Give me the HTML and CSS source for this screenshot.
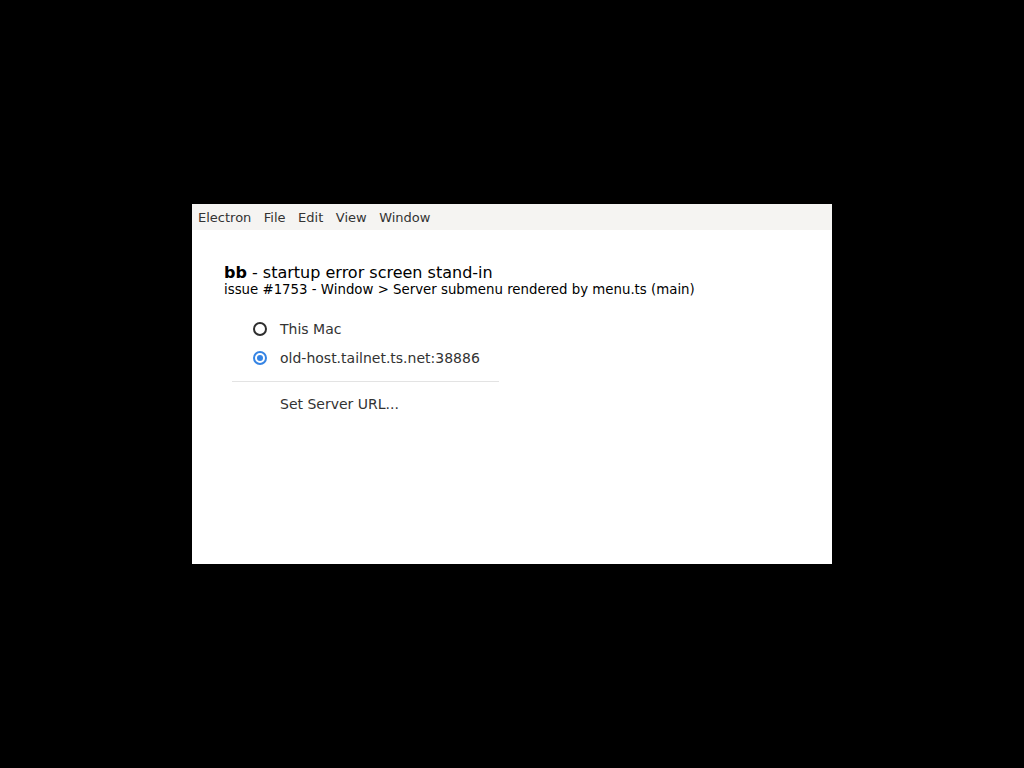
FILE: index.html
```html
<!DOCTYPE html>
<html>
<head>
<meta charset="utf-8">
<link rel="stylesheet" href="styles.css">
</head>
<body>
<div class="window">
  <div class="menubar">
    <span class="menu-item">Electron</span>
    <span class="menu-item">File</span>
    <span class="menu-item">Edit</span>
    <span class="menu-item">View</span>
    <span class="menu-item">Window</span>
  </div>
  <div class="content">
    <div class="title"><b>bb</b> - startup error screen stand-in</div>
    <div class="subtitle">issue #1753 - Window &gt; Server submenu rendered by menu.ts (main)</div>
    <div class="submenu">
      <div class="entry">
        <span class="radio"></span>
        <span class="label">This Mac</span>
      </div>
      <div class="entry">
        <span class="radio checked"></span>
        <span class="label">old-host.tailnet.ts.net:38886</span>
      </div>
      <div class="separator"></div>
      <div class="entry">
        <span class="radio-space"></span>
        <span class="label">Set Server URL...</span>
      </div>
    </div>
  </div>
</div>
</body>
</html>
```
FILE: styles.css
```css
html, body {
  margin: 0;
  padding: 0;
  background: #000;
}
body {
  width: 1024px;
  height: 768px;
  display: flex;
  align-items: center;
  justify-content: center;
  font-family: "DejaVu Sans", sans-serif;
}
.window {
  width: 640px;
  height: 360px;
  background: #fff;
  display: flex;
  flex-direction: column;
}
.menubar {
  height: 26px;
  background: #f5f4f2;
  display: flex;
  align-items: center;
  padding-left: 0;
}
.menu-item {
  font-size: 13px;
  color: #333;
  padding: 0 6px;
}
.menu-item + .menu-item {
  margin-left: 0.5px;
}
.content {
  padding: 34px 0 0 32px;
}
.title {
  font-size: 16px;
  line-height: 18px;
  color: #000;
}
.subtitle {
  font-size: 13.33px;
  line-height: 16px;
  color: #000;
}
.submenu {
  width: 267px;
  margin-top: 16px;
  margin-left: 8px;
}
.entry {
  height: 29px;
  display: flex;
  align-items: center;
  padding-left: 21px;
  gap: 13px;
}
.label {
  font-size: 14px;
  color: #333;
}
.radio, .radio-space {
  width: 14px;
  height: 14px;
  box-sizing: border-box;
  flex: none;
}
.radio {
  border: 2px solid #2e2e2e;
  border-radius: 50%;
  position: relative;
}
.radio.checked {
  border-color: #3584e4;
}
.radio.checked::after {
  content: "";
  position: absolute;
  left: 2px;
  top: 2px;
  width: 6px;
  height: 6px;
  border-radius: 50%;
  background: #3584e4;
}
.separator {
  height: 1px;
  background: #e3e3e3;
  margin: 9px 0 7px;
}
```
